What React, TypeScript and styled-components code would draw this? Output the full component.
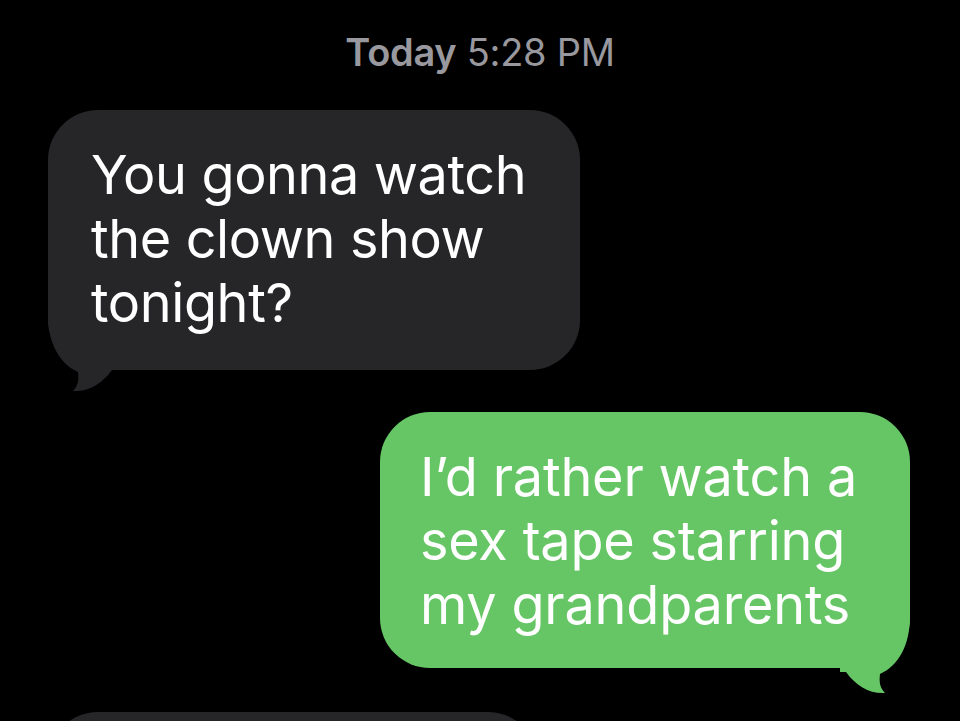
import React from "react";
import styled, { createGlobalStyle } from "styled-components";

const Global = createGlobalStyle`
  html, body { margin: 0; padding: 0; background: #000; }
  body { font-family: Inter, "Noto Sans", sans-serif; -webkit-font-smoothing: antialiased; }
`;

const Screen = styled.div`
  width: 960px;
  height: 721px;
  overflow: hidden;
  background: #000;
  display: flex;
  flex-direction: column;
  padding: 26px 50px 0 48px;
  box-sizing: border-box;
`;

const Stamp = styled.div`
  align-self: center;
  margin-left: 2px;
  color: #98989e;
  font-size: 38px;
  line-height: 52px;
  letter-spacing: -0.3px;
  margin-bottom: 32px;
  white-space: nowrap;
  b { font-weight: 600; }
`;

const Row = styled.div<{ $out?: boolean }>`
  display: flex;
  justify-content: ${(p) => (p.$out ? "flex-end" : "flex-start")};
  margin-bottom: ${(p) => (p.$out ? "44px" : "42px")};
`;

const Bubble = styled.div<{ $out?: boolean; $w: number; $h: number }>`
  position: relative;
  box-sizing: border-box;
  width: ${(p) => p.$w}px;
  height: ${(p) => p.$h}px;
  padding: 33px 0 0 ${(p) => (p.$out ? 40 : 43)}px;
  border-radius: 50px;
  background: ${(p) => (p.$out ? "#66c665" : "#262629")};
  color: #fff;
  font-size: 54px;
  line-height: 64px;
  letter-spacing: ${(p) => (p.$out ? "-0.2px" : "-0.4px")};
`;

const Line = styled.div`
  position: relative;
  z-index: 1;
  white-space: nowrap;
`;

const Tail = styled.svg<{ $out?: boolean }>`
  position: absolute;
  z-index: 0;
  top: 196px;
  ${(p) => (p.$out ? "right: 0;" : "left: 0;")}
  width: 70px;
  height: 84px;
  transform: ${(p) => (p.$out ? "scaleX(-1)" : "none")};
  overflow: visible;
`;

const tailPath =
  "M0 0 L0 8 C0 38 12 58 30 66 C31 74 30 80 25 85 C40 86 54 78 64 64 L70 64 L70 0 Z";

function BubbleTail({ out, color }: { out?: boolean; color: string }) {
  return (
    <Tail $out={out} viewBox="0 0 70 84">
      <path d={tailPath} fill={color} />
    </Tail>
  );
}

export default function App() {
  return (
    <>
      <Global />
      <Screen>
        <Stamp>
          <b>Today</b> 5:28 PM
        </Stamp>
        <Row>
          <Bubble $w={532} $h={260}>
            <BubbleTail color="#262629" />
            <Line>You gonna watch</Line>
            <Line>the clown show</Line>
            <Line>tonight?</Line>
          </Bubble>
        </Row>
        <Row $out>
          <Bubble $out $w={530} $h={256}>
            <BubbleTail out color="#66c665" />
            <Line>I’d rather watch a</Line>
            <Line>sex tape starring</Line>
            <Line>my grandparents</Line>
          </Bubble>
        </Row>
        <Row>
          <Bubble $w={490} $h={200} />
        </Row>
      </Screen>
    </>
  );
}
